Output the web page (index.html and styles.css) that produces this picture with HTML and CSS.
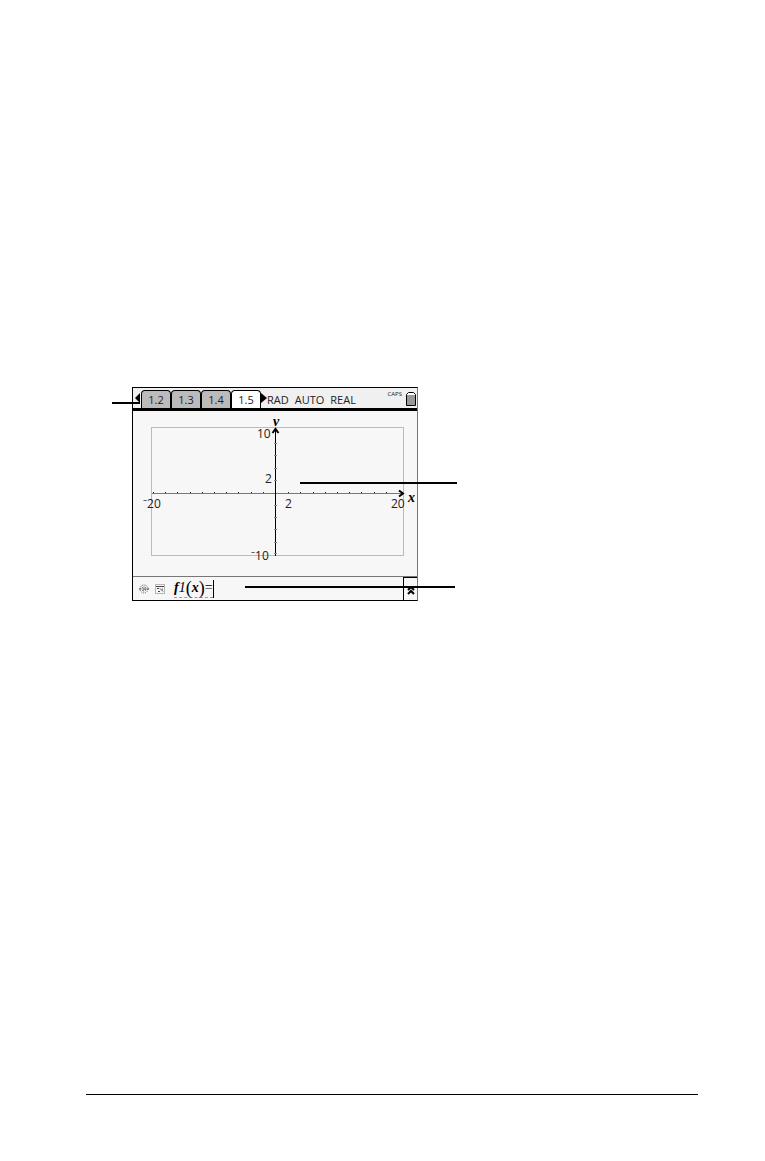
FILE: index.html
```
<!DOCTYPE html>
<html lang="en">
<head>
    <meta charset="utf-8">
    <title>Graphs</title>
    <link rel="stylesheet" href="styles.css">
</head>
<body>
    <main class="page">
        <div class="figure">
            <section class="screen">
                <header class="status-bar">
                    <button class="arrow" aria-label="Previous page">
                        <svg width="6" height="10" viewBox="0 0 6 10"><path d="M6 0v10L1 5z"/></svg>
                    </button>
                    <nav class="tabs">
                        <button class="tab">1.2</button>
                        <button class="tab">1.3</button>
                        <button class="tab">1.4</button>
                        <button class="tab active">1.5</button>
                    </nav>
                    <button class="arrow" aria-label="Next page">
                        <svg width="6" height="10" viewBox="0 0 6 10"><path d="M0 0v10l6-5z"/></svg>
                    </button>
                    <div class="modes"><span>RAD</span><span>AUTO</span><span>REAL</span></div>
                    <span class="caps">CAPS</span>
                    <svg class="battery" width="10" height="14" viewBox="0 0 10 14">
                        <path d="M.5 13.5v-11l2-2h5l2 2v11z" fill="#fff" stroke="#000"/>
                        <path d="M1 3h8v10H1z" fill="#999"/>
                    </svg>
                </header>

                <svg class="graph" viewBox="0 0 284 165">
                    <rect class="frame" x="18.5" y="16.5" width="252" height="128"/>
                    <!-- axes -->
                    <path class="x-axis" d="M19 82.500H271"/>
                    <path class="y-axis" d="M142.500 18V145"/>
                    <path class="ticks" d="M20 81.500h1M32 81.500h1M44 81.500h1M57 81.500h1M69 81.500h1M81 81.500h1M93 81.500h1M105 81.500h1M118 81.500h1M130 81.500h1M155 81.500h1M167 81.500h1M180 81.500h1M192 81.500h1M204 81.500h1M216 81.500h1M228 81.500h1M241 81.500h1M253 81.500h1"/>
                    <path class="y-ticks" d="M141 32.500h3M141 44.500h3M141 57.500h3M141 69.500h3M141 94.500h3M141 106.500h3M141 118.500h3M141 131.500h3M141 142.500h3"/>
                    <path class="head" d="M139.500 22l3-4 3 4M266 79.500l4 3-4 3"/>
                    <text x="124" y="27">10</text>
                    <text x="132" y="72">2</text>
                    <text x="152" y="97">2</text>
                    <text x="10" y="97">⁻20</text>
                    <text x="258" y="97">20</text>
                    <text x="118" y="149">⁻10</text>
                    <text class="axis-name" x="140" y="15">v</text>
                    <text class="axis-name" x="275" y="91">x</text>
                </svg>

                <footer class="entry">
                    <button class="tool" aria-label="Plot type">
                        <svg width="10" height="10" viewBox="0 0 10 10">
                            <circle cx="5" cy="5" r="4" fill="none" stroke="#555" stroke-dasharray="1 1"/>
                            <circle cx="5" cy="5" r="2" fill="none" stroke="#444" stroke-dasharray="2 1"/>
                            <path d="M4 5h2M0 5h2M8 5h2" stroke="#444"/>
                        </svg>
                    </button>
                    <button class="tool" aria-label="Attributes">
                        <svg width="10" height="10" viewBox="0 0 10 10">
                            <rect x=".5" y=".5" width="9" height="9" fill="none" stroke="#777" stroke-dasharray="1 1"/>
                            <path d="M1 2.500h8M2 4.500h2M5 4.500l3 3M3 7.500h2M7 5h1" fill="none" stroke="#444"/>
                        </svg>
                    </button>
                    <label class="fn" for="fn"><i>f</i><i class="thin">1</i><span class="paren">(</span><i>x</i><span class="paren">)</span><span class="thin">=</span></label>
                    <input class="fn-input" id="fn" type="text">
                    <button class="expand" aria-label="Show entries">
                        <svg width="8" height="9" viewBox="0 0 8 9">
                            <path d="M1 4l3-3 3 3M1 8l3-3 3 3" fill="none" stroke="#000" stroke-width="2"/>
                        </svg>
                    </button>
                </footer>
            </section>

            <span class="leader leader-tabs"></span>
            <span class="leader leader-graph"></span>
            <span class="leader leader-entry"></span>
        </div>
        <hr class="rule">
    </main>
</body>
</html>
```
FILE: styles.css
```
* {
    box-sizing: border-box;
}

body {
    margin: 0;
    background: #fff;
    color: #000;
    font-family: "Open Sans", "Noto Sans", sans-serif;
}

button {
    padding: 0;
    border: none;
    background: none;
    color: inherit;
    font: inherit;
    cursor: pointer;
}

svg {
    display: block;
}

.page {
    display: flex;
    flex-direction: column;
    justify-content: space-between;
    min-height: 100vh;
    padding: 387px 67px 66px 86px;
}

.figure {
    position: relative;
    width: 100%;
    max-width: 286px;
    margin-left: 46px;
}

.screen {
    border: 1px solid #000;
    border-right-color: #777;
    background: #f7f7f7;
}

/* Top bar */
.status-bar {
    display: flex;
    align-items: flex-end;
    height: 23px;
    padding: 0 1px;
    border-bottom: 3px solid #000;
    background: #f0f0f0;
    color: #222;
    font-size: 11px;
    line-height: 16px;
}

.arrow {
    align-self: flex-start;
    padding-top: 5px;
}

.tabs {
    display: flex;
    padding-left: 1px;
}

.tab {
    width: 30px;
    height: 18px;
    border: 1px solid #000;
    border-bottom: none;
    border-radius: 4px 4px 0 0;
    background: #bbb;
}

.tab.active {
    background: #fff;
}

.modes {
    display: flex;
    flex: 1;
    gap: 6px;
}

.caps {
    align-self: flex-start;
    margin-right: 4px;
    font-size: 6px;
    line-height: 12px;
}

.battery {
    margin-bottom: 2px;
}

/* Graph */
.graph {
    width: 100%;
    fill: #222;
    font-size: 12px;
}

.frame {
    fill: none;
    stroke: #bbb;
}

.x-axis {
    stroke: #777;
}

.y-axis {
    stroke: #000;
}

.ticks {
    stroke: #222;
}

.y-ticks {
    stroke: #888;
}

.head {
    fill: none;
    stroke: #000;
    stroke-width: 2;
}

.axis-name {
    fill: #000;
    font: italic bold 14px "Liberation Serif", serif;
}

/* Function entry line */
.entry {
    display: flex;
    align-items: center;
    height: 24px;
    padding-left: 6px;
    border-top: 1px solid #777;
}

.tool {
    margin-right: 6px;
}

.fn {
    display: flex;
    align-items: center;
    height: 18px;
    margin-left: 3px;
    border-bottom: 1px dashed #999;
    font: bold 14px "Liberation Serif", serif;
}

.thin {
    font-weight: normal;
}

.paren {
    font-size: 18px;
    font-weight: normal;
}

.fn-input {
    flex: 1;
    min-width: 0;
    height: 18px;
    padding: 0 2px;
    border: none;
    border-left: 1px solid #000;
    background: none;
    font: 14px "Liberation Serif", serif;
}

.expand {
    display: flex;
    align-items: center;
    justify-content: center;
    align-self: stretch;
    width: 14px;
    padding-top: 2px;
    border-top: 1px solid #000;
    border-left: 1px solid #000;
}

/* Leader lines drawn over the screen */
.leader {
    position: absolute;
    height: 2px;
    background: #000;
}

.leader-tabs {
    top: 15px;
    left: -20px;
    width: 28px;
}

.leader-graph {
    top: 95px;
    left: 168px;
    width: 157px;
}

.leader-entry {
    top: 199px;
    left: 113px;
    width: 210px;
}

.rule {
    width: 100%;
    margin: 0;
    border: none;
    border-top: 1px solid #000;
}
```
